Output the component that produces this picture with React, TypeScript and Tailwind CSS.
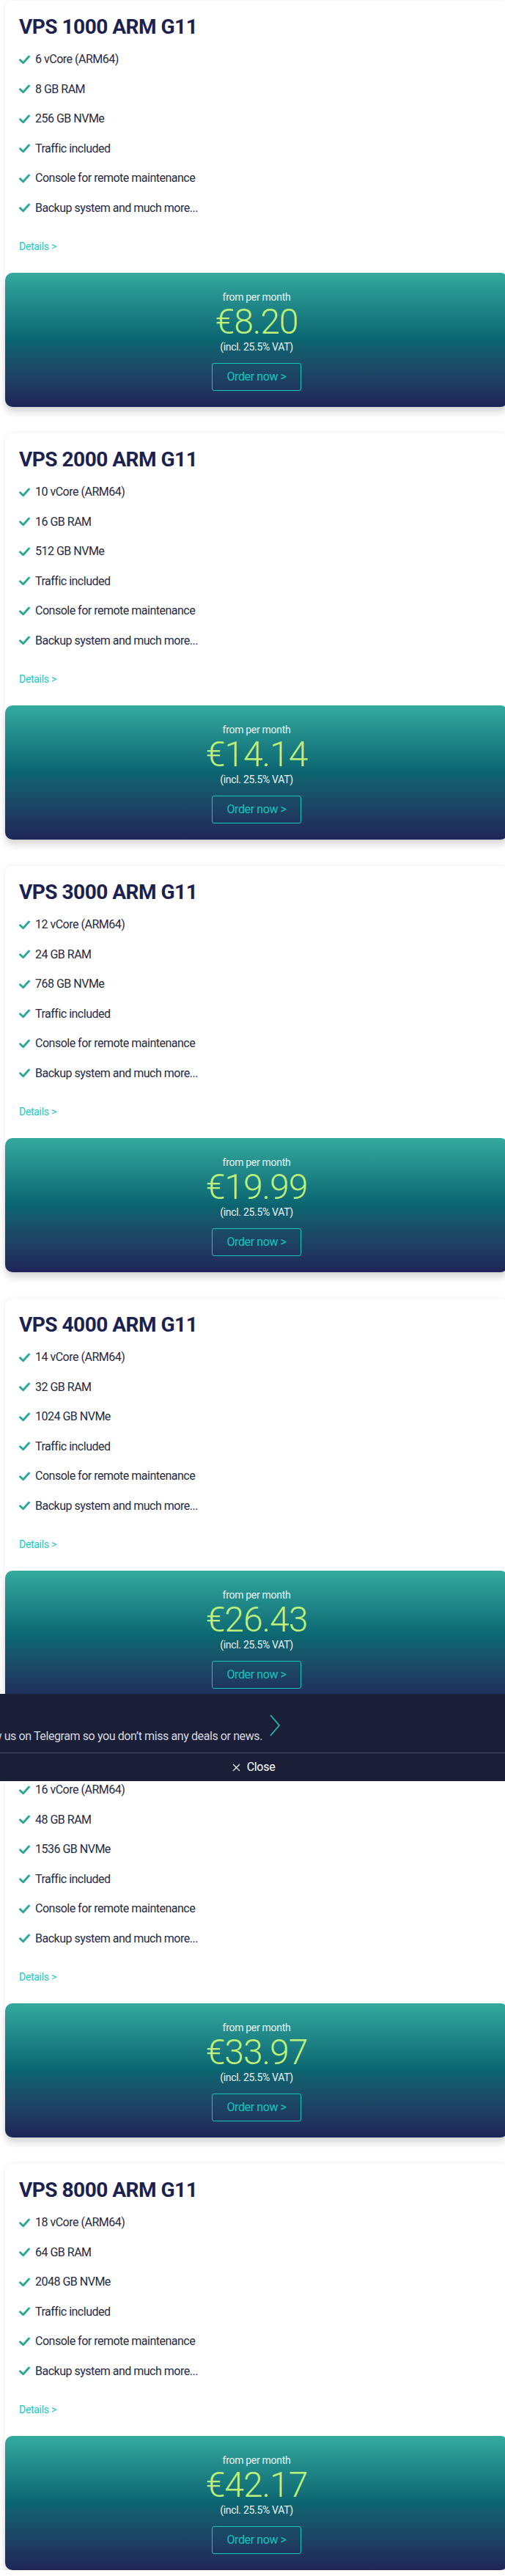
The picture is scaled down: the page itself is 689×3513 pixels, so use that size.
import { X } from 'lucide-react'

type Plan = {
  name: string
  cores: number
  ram: number
  disk: number
  price: string
}

const PLANS: Plan[] = [
  { name: 'VPS 1000 ARM G11', cores: 6, ram: 8, disk: 256, price: '8.20' },
  { name: 'VPS 2000 ARM G11', cores: 10, ram: 16, disk: 512, price: '14.14' },
  { name: 'VPS 3000 ARM G11', cores: 12, ram: 24, disk: 768, price: '19.99' },
  { name: 'VPS 4000 ARM G11', cores: 14, ram: 32, disk: 1024, price: '26.43' },
  { name: 'VPS 6000 ARM G11', cores: 16, ram: 48, disk: 1536, price: '33.97' },
  { name: 'VPS 8000 ARM G11', cores: 18, ram: 64, disk: 2048, price: '42.17' },
]

function Check() {
  return (
    <svg width="15" height="13" viewBox="0 0 15 13" className="shrink-0">
      <path d="M1.5 6.8 L5.6 10.8 L13.5 2" fill="none" stroke="#2aa597" strokeWidth="2.8" strokeLinecap="round" strokeLinejoin="round" />
    </svg>
  )
}

function PlanCard({ plan }: { plan: Plan }) {
  const features = [
    `${plan.cores} vCore (ARM64)`,
    `${plan.ram} GB RAM`,
    `${plan.disk} GB NVMe`,
    'Traffic included',
    'Console for remote maintenance',
    'Backup system and much more...',
  ]

  return (
    <div className="ml-[7px] w-[686px] rounded-[10px] bg-white shadow-[0_0_8px_rgba(0,0,0,0.07)]">
      <div className="px-[19px] pt-[18px]">
        <h2 className="text-[28px] font-bold leading-[36px] tracking-[-0.5px] text-[#1c2150]">{plan.name}</h2>
        <ul className="mt-[6px]">
          {features.map(f => (
            <li key={f} className="flex h-[40.5px] items-center gap-[7px] text-[16px] tracking-[-0.5px] text-[#262a44]">
              <Check />
              <span>{f}</span>
            </li>
          ))}
        </ul>
        <a className="mt-[22px] block text-[14px] leading-[20px] tracking-[-0.3px] text-[#1fc6be]">Details &gt;</a>
      </div>

      {/* price block */}
      <div className="mt-[26px] flex flex-col items-center rounded-[10px] bg-gradient-to-b from-[#34aa9e] via-[#0a6571] to-[#1f2557] pb-[22px] pt-[23px] text-center shadow-[0_8px_10px_rgba(0,0,0,0.13)]">
        <div className="text-[14px] leading-[20px] tracking-[-0.3px] text-[#e8f2f2]">from per month</div>
        <div className="text-[48px] font-light leading-[48px] tracking-[-1px] text-[#bdf17a]">€{plan.price}</div>
        <div className="text-[14px] leading-[20px] tracking-[-0.3px] text-[#e8f2f2]">(incl. 25.5% VAT)</div>
        <button className="mt-[12px] h-[38px] w-[122px] rounded-[3px] border border-[#17c5bc] text-[16px] tracking-[-0.4px] text-[#17c5bc]">
          Order now &gt;
        </button>
      </div>
    </div>
  )
}

export default function App() {
  return (
    <div className="relative w-[689px] overflow-hidden bg-white font-['Roboto',sans-serif]">
      <div className="flex flex-col gap-[36px] pt-[1px]">
        {PLANS.map(p => (
          <PlanCard key={p.name} plan={p} />
        ))}
      </div>

      {/* telegram bar */}
      <div className="absolute left-0 top-[2310px] w-full bg-[#1a1e36]">
        <div className="flex h-[80px] w-[384px] items-end justify-end gap-[8px] pb-[10px] whitespace-nowrap">
          <span className="text-[16px] leading-[24px] tracking-[-0.4px] text-[#d6d8e0]">
            Follow us on Telegram so you don’t miss any deals or news.
          </span>
          <svg width="18" height="30" viewBox="0 0 18 30" className="mb-[12px] shrink-0">
            <path d="M3 1 L15 15 L3 29" fill="none" stroke="#1fc6be" strokeWidth="1.6" />
          </svg>
        </div>
        <div className="h-px bg-[#4b4e62]" />
        <div className="flex h-[38px] items-center justify-center gap-[6px] text-[16px] tracking-[-0.3px] text-white">
          <X size={17} strokeWidth={1.5} />
          <span>Close</span>
        </div>
      </div>
    </div>
  )
}
